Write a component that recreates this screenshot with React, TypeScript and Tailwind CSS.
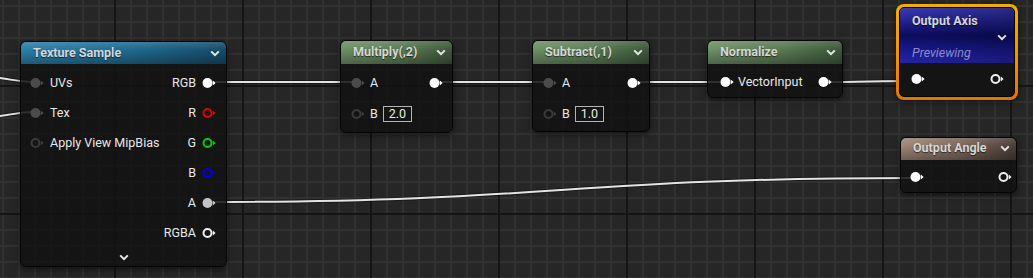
import type { ReactNode } from "react";

const font = "font-['Roboto',sans-serif]";

function Pin({ color, filled }: { color: string; filled?: boolean }) {
  return (
    <svg width="14" height="12" viewBox="0 0 14 12" className="shrink-0">
      {filled ? (
        <circle cx="5.5" cy="6" r="5" fill={color} />
      ) : (
        <circle cx="5.5" cy="6" r="4" fill="none" stroke={color} strokeWidth="2" />
      )}
      <path d="M10.8 3.6 L13.6 6 L10.8 8.4 Z" fill={color} />
    </svg>
  );
}

function Chevron() {
  return (
    <svg width="10" height="7" viewBox="0 0 10 7" className="shrink-0">
      <path d="M1.2 1.4 L5 5.2 L8.8 1.4" fill="none" stroke="#e6e6e6" strokeWidth="2" />
    </svg>
  );
}

function Box({ value }: { value: string }) {
  return (
    <span className="flex h-[16px] items-center border border-[#b4b4b4] px-[5px] text-[12.5px] leading-none text-[#e8e8e8]">
      {value}
    </span>
  );
}

function Header({ title, bg, h }: { title: string; bg: string; h: string }) {
  return (
    <div className={`flex ${h} items-center justify-between pl-[12px] pr-[6px] ${bg}`}>
      <span className="text-[12.5px] font-bold text-[#d6d6d6] [text-shadow:0_1px_1px_rgba(0,0,0,0.6)]">
        {title}
      </span>
      <Chevron />
    </div>
  );
}

function Node({ className, children }: { className: string; children: ReactNode }) {
  return (
    <div
      className={`absolute flex flex-col overflow-hidden rounded-[6px] border border-[#050505] bg-[rgba(17,18,17,0.86)] shadow-[0_2px_6px_rgba(0,0,0,0.55)] ${className}`}
    >
      {children}
    </div>
  );
}

const blueHead =
  "bg-[linear-gradient(180deg,rgba(255,255,255,0.14)_0%,rgba(255,255,255,0)_35%,rgba(0,0,0,0.3)_100%),linear-gradient(90deg,#2c80a9_0%,#1f6a8f_55%,#164c6a_100%)]";
const greenHead =
  "bg-[linear-gradient(180deg,rgba(255,255,255,0.14)_0%,rgba(255,255,255,0)_35%,rgba(0,0,0,0.3)_100%),linear-gradient(90deg,#6f9267_0%,#5a7b54_55%,#3e583b_100%)]";
const brownHead =
  "bg-[linear-gradient(180deg,rgba(255,255,255,0.12)_0%,rgba(255,255,255,0)_35%,rgba(0,0,0,0.3)_100%),linear-gradient(90deg,#a08878_0%,#7a655a_55%,#4a3e38_100%)]";

export default function App() {
  const row = "flex h-[30px] items-center justify-between";
  const side = "flex items-center gap-[6px]";

  return (
    <div className={`relative h-[278px] w-[1033px] overflow-hidden bg-[#262626] text-[12.5px] text-[#e8e8e8] ${font}`}>
      <svg className="absolute inset-0" width="1033" height="278">
        <defs>
          <pattern id="minor" x="2" y="5" width="16" height="16" patternUnits="userSpaceOnUse">
            <rect x="0" y="0" width="2" height="16" fill="#313131" />
            <rect x="0" y="0" width="16" height="2" fill="#313131" />
          </pattern>
          <pattern id="major" x="114" y="85" width="128" height="128" patternUnits="userSpaceOnUse">
            <rect x="0" y="0" width="2" height="128" fill="#151515" />
            <rect x="0" y="0" width="128" height="2" fill="#151515" />
          </pattern>
        </defs>
        <rect width="1033" height="278" fill="url(#minor)" />
        <rect width="1033" height="278" fill="url(#major)" />
        <g fill="none" strokeLinecap="round">
          {[
            "M -10 77.5 C 8 77.5, 14 82, 35 82",
            "M -10 116.5 C 8 116.5, 14 112, 35 112",
            "M 207 82 L 357 82",
            "M 434 82 L 548 82",
            "M 632 82 L 725 82",
            "M 823 82 C 860 82, 880 81, 916 81",
            "M 207 202 C 557 202, 565 178, 915 178",
          ].map((d) => (
            <g key={d}>
              <path d={d} stroke="rgba(0,0,0,0.35)" strokeWidth="4" />
              <path d={d} stroke="#e4e4e4" strokeWidth="2" />
            </g>
          ))}
        </g>
      </svg>

      {/* Texture Sample */}
      <Node className="left-[20px] top-[41px] h-[226px] w-[207px]">
        <Header title="Texture Sample" bg={blueHead} h="h-[22px]" />
        <div className="flex flex-col pl-[9px] pr-[10px] pt-[4px]">
          <div className={row}>
            <div className={side}>
              <Pin color="#4b4b4b" filled />
              <span>UVs</span>
            </div>
            <div className={side}>
              <span>RGB</span>
              <Pin color="#ffffff" filled />
            </div>
          </div>
          <div className={row}>
            <div className={side}>
              <Pin color="#4b4b4b" filled />
              <span>Tex</span>
            </div>
            <div className={side}>
              <span>R</span>
              <Pin color="#e00000" />
            </div>
          </div>
          <div className={row}>
            <div className={side}>
              <Pin color="#3a3a3a" />
              <span>Apply View MipBias</span>
            </div>
            <div className={side}>
              <span>G</span>
              <Pin color="#00d000" />
            </div>
          </div>
          <div className="flex h-[30px] items-center justify-end">
            <div className={side}>
              <span>B</span>
              <Pin color="#0000f0" />
            </div>
          </div>
          <div className="flex h-[30px] items-center justify-end">
            <div className={side}>
              <span>A</span>
              <Pin color="#c4c4c4" filled />
            </div>
          </div>
          <div className="flex h-[30px] items-center justify-end">
            <div className={side}>
              <span>RGBA</span>
              <Pin color="#f0f0f0" />
            </div>
          </div>
          <div className="flex h-[18px] items-center justify-center pl-[2px]">
            <Chevron />
          </div>
        </div>
      </Node>

      {/* Multiply */}
      <Node className="left-[340px] top-[40px] h-[93px] w-[113px]">
        <Header title="Multiply(,2)" bg={greenHead} h="h-[23px]" />
        <div className="flex flex-col pl-[10px] pr-[9px] pt-[4px]">
          <div className={row}>
            <div className="flex items-center gap-[5px]">
              <Pin color="#4b4b4b" filled />
              <span>A</span>
            </div>
            <Pin color="#ffffff" filled />
          </div>
          <div className="flex h-[32px] items-center gap-[5px]">
            <Pin color="#3a3a3a" />
            <span>B</span>
            <Box value="2.0" />
          </div>
        </div>
      </Node>

      {/* Subtract */}
      <Node className="left-[532px] top-[40px] h-[92px] w-[118px]">
        <Header title="Subtract(,1)" bg={greenHead} h="h-[23px]" />
        <div className="flex flex-col pl-[10px] pr-[8px] pt-[4px]">
          <div className={row}>
            <div className="flex items-center gap-[5px]">
              <Pin color="#4b4b4b" filled />
              <span>A</span>
            </div>
            <Pin color="#ffffff" filled />
          </div>
          <div className="flex h-[32px] items-center gap-[5px]">
            <Pin color="#3a3a3a" />
            <span>B</span>
            <Box value="1.0" />
          </div>
        </div>
      </Node>

      {/* Normalize */}
      <Node className="left-[707px] top-[40px] h-[58px] w-[136px]">
        <Header title="Normalize" bg={greenHead} h="h-[23px]" />
        <div className="flex flex-col pl-[12px] pr-[10px] pt-[3px]">
          <div className={row}>
            <div className="flex items-center gap-[4px]">
              <Pin color="#ffffff" filled />
              <span>VectorInput</span>
            </div>
            <Pin color="#ffffff" filled />
          </div>
        </div>
      </Node>

      {/* Output Axis (selected) */}
      <div className="absolute left-[896px] top-[4px] h-[96px] w-[122px] rounded-[8px] bg-[linear-gradient(180deg,#f2ae00_0%,#ee9200_60%,#e07400_100%)] p-[3px] shadow-[0_2px_6px_rgba(0,0,0,0.55)]">
        <div className="flex h-full flex-col overflow-hidden rounded-[5px] border border-[#050505] bg-[#131413]">
          <div className="flex h-[55px] flex-col bg-[linear-gradient(90deg,rgba(0,0,0,0)_0%,rgba(0,0,0,0.25)_100%),linear-gradient(180deg,#3a3ab4_0%,#1c1c86_30%,#0c0c5e_50%,#1a1a92_78%,#2424a6_100%)] pl-[12px] pr-[7px] pt-[4px]">
            <span className="text-[12.5px] font-bold text-[#d6d6d6] [text-shadow:0_1px_1px_rgba(0,0,0,0.6)]">Output Axis</span>
            <div className="flex h-[16px] items-center justify-end">
              <Chevron />
            </div>
            <span className="text-[12.5px] italic text-[#8c8cc8]">Previewing</span>
          </div>
          <div className="flex h-[34px] items-center justify-between pl-[11px] pr-[10px] pb-[2px]">
            <Pin color="#ffffff" filled />
            <Pin color="#f0f0f0" />
          </div>
        </div>
      </div>

      {/* Output Angle */}
      <Node className="left-[900px] top-[137px] h-[56px] w-[117px]">
        <Header title="Output Angle" bg={brownHead} h="h-[22px]" />
        <div className="flex h-[33px] items-center justify-between pl-[9px] pr-[4px] pt-[3px]">
          <Pin color="#ffffff" filled />
          <Pin color="#f0f0f0" />
        </div>
      </Node>
    </div>
  );
}
